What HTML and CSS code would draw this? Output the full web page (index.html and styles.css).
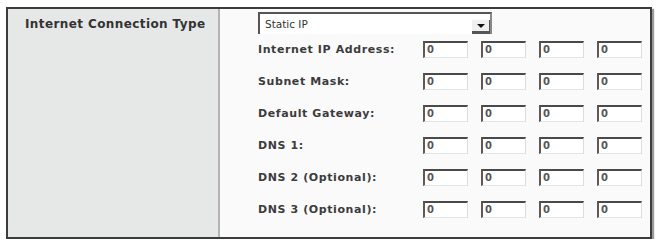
FILE: index.html
```html
<!DOCTYPE html>
<html>
<head>
<meta charset="utf-8">
<link rel="stylesheet" href="styles.css">
</head>
<body>
<div class="frame">
  <div class="side">
    <div class="title">Internet Connection Type</div>
  </div>
  <div class="main">
    <div class="select">
      <span class="sel-text">Static IP</span>
      <span class="sel-btn"><span class="tri"></span></span>
    </div>
    <div class="rows">
      <div class="label">Internet IP Address:</div>
      <div class="ip"><div class="box">0</div><div class="box">0</div><div class="box">0</div><div class="box">0</div></div>
      <div class="label">Subnet Mask:</div>
      <div class="ip"><div class="box">0</div><div class="box">0</div><div class="box">0</div><div class="box">0</div></div>
      <div class="label">Default Gateway:</div>
      <div class="ip"><div class="box">0</div><div class="box">0</div><div class="box">0</div><div class="box">0</div></div>
      <div class="label">DNS 1:</div>
      <div class="ip"><div class="box">0</div><div class="box">0</div><div class="box">0</div><div class="box">0</div></div>
      <div class="label">DNS 2 (Optional):</div>
      <div class="ip"><div class="box">0</div><div class="box">0</div><div class="box">0</div><div class="box">0</div></div>
      <div class="label">DNS 3 (Optional):</div>
      <div class="ip"><div class="box">0</div><div class="box">0</div><div class="box">0</div><div class="box">0</div></div>
    </div>
  </div>
</div>
</body>
</html>
```
FILE: styles.css
```css
html, body {
  margin: 0;
  padding: 0;
  background: #ffffff;
}
body {
  font-family: "DejaVu Sans", "Liberation Sans", sans-serif;
  color: #3a3a3a;
}
.frame {
  margin: 7px 0 0 6px;
  width: 646px;
  height: 232px;
  box-sizing: border-box;
  border: 2px solid #3c3c3c;
  box-shadow: 2px 2px 1px #9a9a9a;
  display: flex;
  background: #fafafa;
}
.side {
  width: 210px;
  flex: none;
  background: #e6e8e8;
  border-right: 2px solid #b4b4b4;
}
.title {
  padding: 8px 0 0 17px;
  font-weight: bold;
  font-size: 12px;
  color: #333;
  letter-spacing: 0.4px;
}
.main {
  flex: 1;
  padding: 3px 0 0 38px;
}
.select {
  width: 234px;
  height: 22px;
  box-sizing: border-box;
  border-top: 2px solid #555;
  border-left: 2px solid #555;
  border-right: 2px solid #888;
  display: flex;
  align-items: center;
  justify-content: space-between;
  background: #fff;
}
.sel-text {
  font-size: 10.5px;
  color: #333;
  padding-left: 5px;
}
.sel-btn {
  width: 18px;
  height: 14px;
  align-self: flex-end;
  border-bottom: 3px solid #555;
  border-right: 1px solid #555;
  display: flex;
  align-items: center;
  justify-content: center;
  box-sizing: border-box;
  background: #f0f0f0;
}
.tri {
  width: 0;
  height: 0;
  border-left: 4px solid transparent;
  border-right: 4px solid transparent;
  border-top: 4px solid #111;
}
.rows {
  display: grid;
  grid-template-columns: 165px auto;
  grid-auto-rows: 17px;
  row-gap: 15px;
  margin-top: 7px;
  align-items: center;
}
.label {
  font-size: 11px;
  font-weight: bold;
  color: #3c3c3c;
  letter-spacing: 0.6px;
}
.ip {
  display: flex;
  gap: 13px;
}
.box {
  width: 45px;
  height: 17px;
  box-sizing: border-box;
  border-top: 2px solid #4a4a4a;
  border-left: 2px solid #5a5a5a;
  border-right: 1px solid #dcdcdc;
  border-bottom: 1px solid #e4e4e4;
  font-size: 10px;
  font-weight: bold;
  color: #555;
  padding-left: 2px;
  line-height: 14px;
  background: #fff;
}
```
